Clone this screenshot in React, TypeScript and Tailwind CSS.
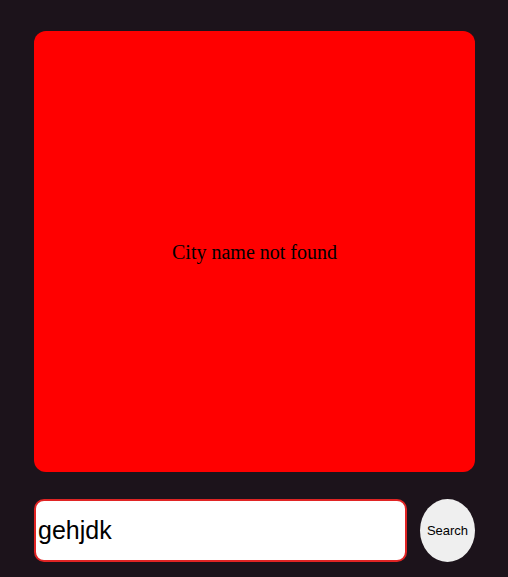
export default function App() {
  return (
    <div className="min-h-[577px] w-full bg-[#1c131b] pl-[34px] pr-[33px] pt-[31px] pb-4">
      <div className="flex h-[441px] w-[441px] items-center justify-center rounded-xl bg-[#ff0000]">
        <p className="font-['Liberation_Serif',serif] text-[20px] text-black">City name not found</p>
      </div>
      <div className="mt-[27px] flex w-[441px] items-center gap-[13px]">
        <input
          defaultValue="gehjdk"
          className="h-[63px] w-[373px] rounded-[10px] border-2 border-[#e02424] bg-white px-[2px] font-['Liberation_Sans',Arial,sans-serif] text-[25px] text-black outline-none"
        />
        <button className="h-[63px] w-[55px] rounded-[50%] bg-[#efefef] font-['Liberation_Sans',Arial,sans-serif] text-[13px] text-black">
          Search
        </button>
      </div>
    </div>
  )
}
